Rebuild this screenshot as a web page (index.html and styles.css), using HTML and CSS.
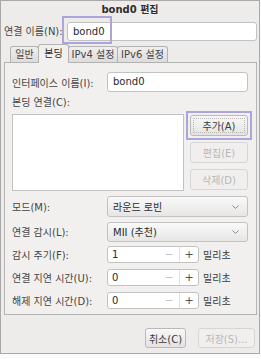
FILE: index.html
```html
<!DOCTYPE html>
<html lang="ko">
<head>
    <meta charset="UTF-8">
    <title>bond0 편집</title>
    <link rel="stylesheet" href="styles.css">
</head>
<body>
    <div class="window">
        <div class="titlebar">bond0 편집</div>

        <div class="name-row">
            <span class="name-label">연결 이름(N):</span>
            <div class="entry name-entry">bond0</div>
            <span class="mark name-mark"></span>
        </div>

        <div class="tabs">
            <div class="tab tab-general">일반</div>
            <div class="tab tab-bond active">본딩</div>
            <div class="tab tab-ipv4">IPv4 설정</div>
            <div class="tab tab-ipv6">IPv6 설정</div>
        </div>

        <div class="panel">
            <div class="form-row row-iface">
                <span class="label">인터페이스 이름(I):</span>
                <div class="entry field">bond0</div>
            </div>

            <div class="section-label">본딩 연결(C):</div>

            <div class="slaves">
                <div class="slave-list"></div>
                <div class="slave-buttons">
                    <div class="btn-wrap">
                        <button class="btn focused">추가(A)</button>
                        <span class="mark btn-mark"></span>
                    </div>
                    <button class="btn" disabled>편집(E)</button>
                    <button class="btn" disabled>삭제(D)</button>
                </div>
            </div>

            <div class="form-row row-mode">
                <span class="label">모드(M):</span>
                <div class="combo field">
                    <span>라운드 로빈</span>
                    <svg class="chevron" width="7" height="4" viewBox="0 0 7 4"><polyline points="0.5,0.5 3.5,3.5 6.5,0.5" fill="none" stroke="#8a8a8a" stroke-width="1"/></svg>
                </div>
            </div>

            <div class="form-row row-monitor">
                <span class="label">연결 감시(L):</span>
                <div class="combo field">
                    <span>MII (추천)</span>
                    <svg class="chevron" width="7" height="4" viewBox="0 0 7 4"><polyline points="0.5,0.5 3.5,3.5 6.5,0.5" fill="none" stroke="#8a8a8a" stroke-width="1"/></svg>
                </div>
            </div>

            <div class="form-row spin-row first-spin">
                <span class="label">감시 주기(F):</span>
                <div class="spin">
                    <span class="spin-value">1</span>
                    <span class="spin-minus">−</span>
                    <span class="spin-plus">+</span>
                </div>
                <span class="unit">밀리초</span>
            </div>

            <div class="form-row spin-row">
                <span class="label">연결 지연 시간(U):</span>
                <div class="spin">
                    <span class="spin-value">0</span>
                    <span class="spin-minus">−</span>
                    <span class="spin-plus">+</span>
                </div>
                <span class="unit">밀리초</span>
            </div>

            <div class="form-row spin-row">
                <span class="label">해제 지연 시간(D):</span>
                <div class="spin">
                    <span class="spin-value">0</span>
                    <span class="spin-minus">−</span>
                    <span class="spin-plus">+</span>
                </div>
                <span class="unit">밀리초</span>
            </div>
        </div>

        <div class="actions">
            <button class="btn btn-cancel">취소(C)</button>
            <button class="btn btn-save" disabled>저장(S)...</button>
        </div>
    </div>
</body>
</html>
```

FILE: styles.css
```css
* {
    margin: 0;
    padding: 0;
    box-sizing: border-box;
}

body {
    font-family: 'DejaVu Sans', 'Noto Sans CJK KR', sans-serif;
    font-size: 10px;
    color: #3a3a3a;
    background: #fbfbfb;
}

.window {
    width: 260px;
    height: 354px;
    border: 1px solid #a9a9a9;
    background: #edeceb;
}

.titlebar {
    height: 18px;
    line-height: 18px;
    text-align: center;
    font-weight: bold;
    color: #2e2e2e;
}

/* connection name */

.name-row {
    position: relative;
    height: 25px;
    display: flex;
    align-items: flex-start;
    padding-left: 3px;
}

.name-label {
    width: 63px;
    line-height: 19px;
    margin-top: 3px;
    color: #454545;
}

.entry {
    height: 19px;
    line-height: 17px;
    padding-left: 5px;
    background: #fff;
    border: 1px solid #c2c2c2;
    border-radius: 3px;
    color: #2a2a2a;
}

.name-entry {
    width: 190px;
    margin-top: 3px;
}

.mark {
    position: absolute;
    border: 2px solid #aba5db;
    pointer-events: none;
}

.name-mark {
    left: 61px;
    top: -3px;
    width: 50px;
    height: 28px;
}

/* tabs */

.tabs {
    height: 19px;
    display: flex;
    align-items: flex-end;
    margin-left: 9px;
    margin-bottom: -1px;
    position: relative;
    z-index: 1;
}

.tab {
    height: 16px;
    line-height: 15px;
    text-align: center;
    border: 1px solid #b3b3b3;
    border-bottom: none;
    border-radius: 3px 3px 0 0;
    background: linear-gradient(#efefee, #dddcdb);
    color: #454545;
    margin-bottom: 1px;
}

.tab-general { width: 29px; }
.tab-bond { width: 31px; }
.tab-ipv4 { width: 50px; }
.tab-ipv6 { width: 51px; }

.tab.active {
    height: 19px;
    line-height: 18px;
    margin-bottom: 0;
    background: #f1f0ef;
    color: #2a2a2a;
}

.tab + .tab {
    margin-left: -1px;
}

/* bond page */

.panel {
    height: 253px;
    margin: 0 2px 0 3px;
    padding: 9px 8px 0 7px;
    border: 1px solid #b3b3b3;
    background: #f1f0ef;
}

.form-row {
    display: flex;
    align-items: center;
}

.label {
    width: 95px;
    color: #454545;
    white-space: nowrap;
}

.field {
    width: 141px;
}

.row-iface {
    height: 20px;
}

.row-iface .entry {
    height: 20px;
    line-height: 18px;
}

.section-label {
    height: 22px;
    line-height: 22px;
    color: #454545;
}

.slaves {
    height: 77px;
    display: flex;
    gap: 6px;
}

.slave-list {
    width: 172px;
    background: #fff;
    border: 1px solid #c2c2c2;
}

.slave-buttons {
    width: 58px;
    padding-top: 1px;
    display: flex;
    flex-direction: column;
    gap: 6px;
}

.btn-wrap {
    position: relative;
}

.btn-mark {
    left: -4px;
    top: -4px;
    right: -4px;
    bottom: -4px;
}

.btn {
    display: block;
    width: 100%;
    height: 21px;
    font: inherit;
    color: #3a3a3a;
    border: 1px solid #bababa;
    border-radius: 3px;
    background: linear-gradient(#f8f8f8, #e4e3e2);
}

.btn.focused {
    outline: 1px dotted #b8b8b8;
    outline-offset: -4px;
}

.btn:disabled {
    color: #b8b8b8;
    border-color: #d6d6d6;
    background: #f0efee;
}

.combo {
    display: flex;
    align-items: center;
    justify-content: space-between;
    padding: 0 8px 0 5px;
    border: 1px solid #c2c2c2;
    border-radius: 3px;
    background: linear-gradient(#f9f9f9, #e7e6e5);
    color: #2a2a2a;
}

.row-mode {
    height: 21px;
    margin-top: 5px;
}

.row-mode .combo {
    height: 21px;
}

.row-monitor {
    height: 21px;
    margin-top: 4px;
}

.row-monitor .combo {
    height: 20px;
}

.spin-row {
    height: 17px;
    margin-top: 6px;
}

.spin-row.first-spin {
    margin-top: 4px;
}

.spin {
    width: 92px;
    height: 17px;
    display: flex;
    background: #fff;
    border: 1px solid #c2c2c2;
    border-radius: 3px;
    line-height: 15px;
}

.spin-value {
    flex: 1;
    padding-left: 4px;
    color: #2a2a2a;
}

.spin-minus,
.spin-plus {
    width: 20px;
    text-align: center;
    font-size: 11px;
}

.spin-minus {
    color: #c8c8c8;
}

.spin-plus {
    width: 19px;
    color: #505050;
    border-left: 1px solid #e0e0e0;
}

.unit {
    margin-left: 4px;
    color: #3a3a3a;
}

/* dialog buttons */

.actions {
    display: flex;
    justify-content: flex-end;
    gap: 12px;
    padding: 13px 4px 0 0;
}

.actions .btn {
    height: 20px;
}

.btn-cancel {
    width: 41px;
}

.actions .btn-save {
    width: 57px;
}
```
